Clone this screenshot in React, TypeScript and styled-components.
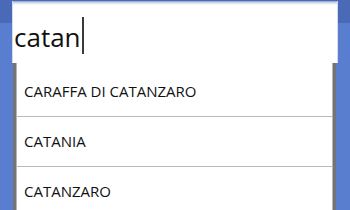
import React from "react";
import styled, { createGlobalStyle } from "styled-components";

const GlobalStyle = createGlobalStyle`
  html, body {
    margin: 0;
    padding: 0;
  }
  body {
    font-family: "Open Sans", "DejaVu Sans", sans-serif;
    background: #5a7ecf;
  }
`;

const suggestions = ["CARAFFA DI CATANZARO", "CATANIA", "CATANZARO"];

const App = () => {
  return (
    <>
      <GlobalStyle />
      <Screen>
        <SearchBox>
          <Query>catan</Query>
          <Caret />
        </SearchBox>
        <Dropdown>
          {suggestions.map((city) => (
            <Suggestion key={city}>{city}</Suggestion>
          ))}
        </Dropdown>
      </Screen>
    </>
  );
};

const Screen = styled.div`
  width: 350px;
  height: 210px;
  overflow: hidden;
  background: linear-gradient(
    to bottom,
    #4a69b6 0,
    #4a69b6 23px,
    #5a7ecf 23px,
    #5a7ecf 100%
  );
`;

const SearchBox = styled.div`
  position: relative;
  z-index: 1;
  margin: 1px 12px 0 12px;
  height: 62px;
  box-sizing: border-box;
  padding: 16px 0 0 1px;
  border-left: 1px solid #d6dbe6;
  border-right: 1px solid #d6dbe6;
  background: linear-gradient(
    to bottom,
    #8c9fd0 0,
    #d9e0f0 2px,
    #ffffff 4px,
    #ffffff 100%
  );
  line-height: 36px;
  white-space: nowrap;
`;

const Query = styled.span`
  font-size: 26px;
  color: #111;
`;

const Caret = styled.span`
  display: inline-block;
  width: 2px;
  height: 37px;
  margin-left: 1px;
  vertical-align: -7px;
  background: #3a3a3a;
`;

const Dropdown = styled.div`
  margin: -3px 14px 0 13px;
  padding-top: 7px;
  background: #ffffff;
  border-left: 3px solid #747474;
  border-right: 3px solid #747474;
  box-shadow: inset 1px 0 #b5b5b5, inset -1px 0 #b5b5b5;
`;

const Suggestion = styled.div`
  height: 49px;
  line-height: 49px;
  padding-left: 8px;
  font-size: 15px;
  color: #111;
  border-bottom: 1px solid #b9b9b9;
  white-space: nowrap;
`;

export default App;
